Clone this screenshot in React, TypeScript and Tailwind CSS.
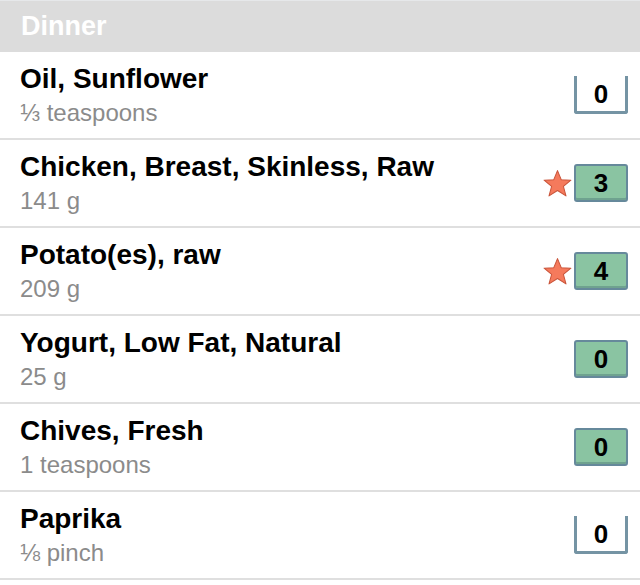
import React from 'react';

interface Item {
  name: string;
  amount: string;
  count: number;
  starred?: boolean;
  filled?: boolean;
}

const items: Item[] = [
  { name: 'Oil, Sunflower', amount: '⅓ teaspoons', count: 0 },
  { name: 'Chicken, Breast, Skinless, Raw', amount: '141 g', count: 3, starred: true, filled: true },
  { name: 'Potato(es), raw', amount: '209 g', count: 4, starred: true, filled: true },
  { name: 'Yogurt, Low Fat, Natural', amount: '25 g', count: 0, filled: true },
  { name: 'Chives, Fresh', amount: '1 teaspoons', count: 0, filled: true },
  { name: 'Paprika', amount: '⅛ pinch', count: 0 },
];

const Star: React.FC = () => (
  <svg width="31" height="29" viewBox="0 0 30 28" className="mr-[1px]">
    <polygon
      points="15,1.5 18.6,10.3 28,10.8 20.7,16.8 23.2,26 15,20.8 6.8,26 9.3,16.8 2,10.8 11.4,10.3"
      fill="#f57a5c"
      stroke="#c9553b"
      strokeWidth="1"
      strokeLinejoin="round"
    />
  </svg>
);

const Badge: React.FC<{ value: number; filled?: boolean }> = ({ value, filled }) =>
  filled ? (
    <div className="w-[54px] h-[38px] flex items-center justify-center rounded-[3px] border-2 border-[#66899b] bg-[#8ac4a2] shadow-[inset_0_-2px_0_rgba(60,100,110,0.35)] text-[26px] font-bold text-black leading-none">
      {value}
    </div>
  ) : (
    <div className="w-[54px] h-[38px] flex items-center justify-center rounded-b-[3px] border-x-[3px] border-b-[3px] border-[#7594a4] bg-white text-[26px] font-bold text-black leading-none">
      {value}
    </div>
  );

const App: React.FC = () => {
  return (
    <div className="w-[640px] h-[585px] bg-white overflow-hidden font-['Liberation_Sans',Arial,sans-serif]">
      <div className="h-[52px] bg-[#dcdcdc] border-t border-[#e6e8ea] flex items-center pl-[21px]">
        <span className="text-[27px] font-bold text-white leading-none">Dinner</span>
      </div>
      {items.map(item => (
        <div
          key={item.name}
          className="h-[88px] border-b-2 border-[#dfdfdf] flex items-center pl-[20px] pr-[12px]"
        >
          <div className="flex-1 flex flex-col">
            <span className="text-[28px] font-bold text-black leading-[32px]">{item.name}</span>
            <span className="mt-[3px] text-[24px] text-[#8b8b8b] leading-[30px]">{item.amount}</span>
          </div>
          <div className="flex items-center">
            {item.starred && <Star />}
            <Badge value={item.count} filled={item.filled} />
          </div>
        </div>
      ))}
    </div>
  );
};

export default App;
